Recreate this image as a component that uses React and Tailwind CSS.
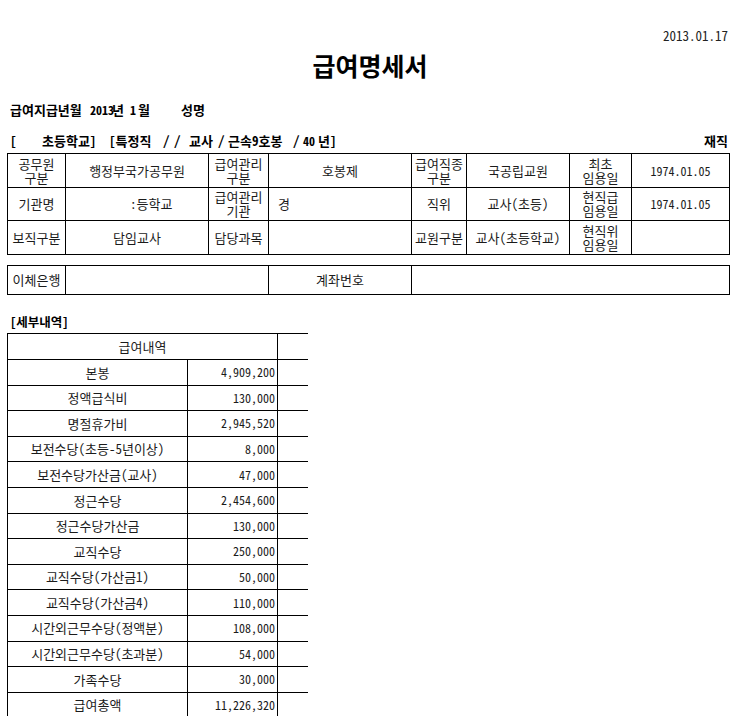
const info = [
  [['공무원', '구분'], '행정부국가공무원', ['급여관리', '구분'], '호봉제', ['급여직종', '구분'], '국공립교원', ['최초', '임용일'], '1974.01.05'],
  [['기관명'], ':등학교', ['급여관리', '기관'], '경', ['직위'], '교사(초등)', ['현직급', '임용일'], '1974.01.05'],
  [['보직구분'], '담임교사', ['담당과목'], '', ['교원구분'], '교사(초등학교)', ['현직위', '임용일'], ''],
]

const rowHeights = ['h-[34px]', 'h-[33px]', 'h-[34px]']

const details = [
  ['본봉', '4,909,200'],
  ['정액급식비', '130,000'],
  ['명절휴가비', '2,945,520'],
  ['보전수당(초등-5년이상)', '8,000'],
  ['보전수당가산금(교사)', '47,000'],
  ['정근수당', '2,454,600'],
  ['정근수당가산금', '130,000'],
  ['교직수당', '250,000'],
  ['교직수당(가산금1)', '50,000'],
  ['교직수당(가산금4)', '110,000'],
  ['시간외근무수당(정액분)', '108,000'],
  ['시간외근무수당(초과분)', '54,000'],
  ['가족수당', '30,000'],
  ['급여총액', '11,226,320'],
]

const Label = ({ lines }) => (
  <td className="border border-black text-center align-middle leading-[14px]">
    {lines.map((l) => (
      <div key={l}>{l}</div>
    ))}
  </td>
)

const App = () => {
  return (
    <div
      className="relative h-[716px] w-[732px] overflow-hidden bg-white text-[13px] text-[#1b1b1b]"
      style={{ fontFamily: '"Noto Sans Mono CJK KR", "Noto Sans CJK KR", monospace' }}
    >
      <div className="flex justify-end pr-[4px] pt-[28px] text-[13px] leading-[16px] text-[#222]">2013.01.17</div>

      <h1 className="mt-[6px] text-center text-[25px] font-bold leading-[30px] text-black">
        <span className="ml-[8px]">급여명세서</span>
      </h1>

      {/* 급여지급년월 줄 */}
      <div className="mt-[22px] flex whitespace-pre pl-[10px] font-bold leading-[16px] text-black">
        <span className="w-[80px] shrink-0">급여지급년월</span>
        <span className="w-[22px] shrink-0 text-[12px]">2013</span>
        <span className="w-[18px] shrink-0">년</span>
        <span className="w-[8px] shrink-0 text-[12px]">1</span>
        <span className="w-[43px] shrink-0">월</span>
        <span>성명</span>
      </div>

      <div className="mt-[15px] flex justify-between pl-[10px] pr-[4px] font-bold leading-[16px] text-black">
        <div className="flex whitespace-pre">
          <span className="w-[32px] shrink-0">[</span>
          <span className="w-[67px] shrink-0">초등학교]</span>
          <span className="w-[54px] shrink-0">[특정직</span>
          <span className="w-[11px] shrink-0">/</span>
          <span className="w-[15px] shrink-0">/</span>
          <span className="w-[29px] shrink-0">교사</span>
          <span className="w-[10px] shrink-0">/</span>
          <span className="w-[65px] shrink-0">근속9호봉</span>
          <span className="w-[10px] shrink-0">/</span>
          <span className="w-[15px] shrink-0 text-[12px]">40</span>
          <span>년]</span>
        </div>
        <span>재직</span>
      </div>

      <table className="ml-[7px] mt-[4px] w-[723px] table-fixed border-collapse">
        <colgroup>
          <col className="w-[58px]" />
          <col className="w-[143px]" />
          <col className="w-[60px]" />
          <col className="w-[143px]" />
          <col className="w-[55px]" />
          <col className="w-[103px]" />
          <col className="w-[62px]" />
          <col className="w-[98px]" />
        </colgroup>
        <tbody>
          {info.map((row, i) => (
            <tr key={i} className={rowHeights[i]}>
              <Label lines={row[0]} />
              <td className={`border border-black align-middle ${i === 1 ? 'pl-[64px] text-left' : 'text-center'}`}>{row[1]}</td>
              <Label lines={row[2]} />
              <td className={`border border-black align-middle ${i === 1 ? 'pl-[9px] text-left' : 'text-center'}`}>{row[3]}</td>
              <Label lines={row[4]} />
              <td className="border border-black text-center align-middle">{row[5]}</td>
              <Label lines={row[6]} />
              <td className="border border-black text-center align-middle text-[12px]">{row[7]}</td>
            </tr>
          ))}
        </tbody>
      </table>

      <table className="ml-[7px] mt-[10px] w-[723px] table-fixed border-collapse">
        <colgroup>
          <col className="w-[58px]" />
          <col className="w-[203px]" />
          <col className="w-[143px]" />
          <col className="w-[318px]" />
        </colgroup>
        <tbody>
          <tr className="h-[29px]">
            <td className="border border-black text-center align-middle">이체은행</td>
            <td className="border border-black"></td>
            <td className="border border-black text-center align-middle">계좌번호</td>
            <td className="border border-black"></td>
          </tr>
        </tbody>
      </table>

      <div className="mt-[19px] pl-[10px] text-[12.5px] font-bold leading-[16px] text-black">[세부내역]</div>

      <table className="ml-[7px] mt-[3px] w-[300px] table-fixed border-collapse">
        <colgroup>
          <col className="w-[180px]" />
          <col className="w-[90px]" />
          <col className="w-[30px]" />
        </colgroup>
        <tbody>
          <tr className="h-[26px]">
            <td colSpan={2} className="border border-black text-center align-middle">급여내역</td>
            <td className="border-y border-l border-black"></td>
          </tr>
          {details.map(([name, amount]) => (
            <tr key={name} className="h-[25.6px]">
              <td className="border border-black text-center align-middle">{name}</td>
              <td className="border border-black pr-[2px] text-right align-middle text-[12px]">{amount}</td>
              <td className="border-y border-l border-black"></td>
            </tr>
          ))}
        </tbody>
      </table>
    </div>
  )
}

export default App
